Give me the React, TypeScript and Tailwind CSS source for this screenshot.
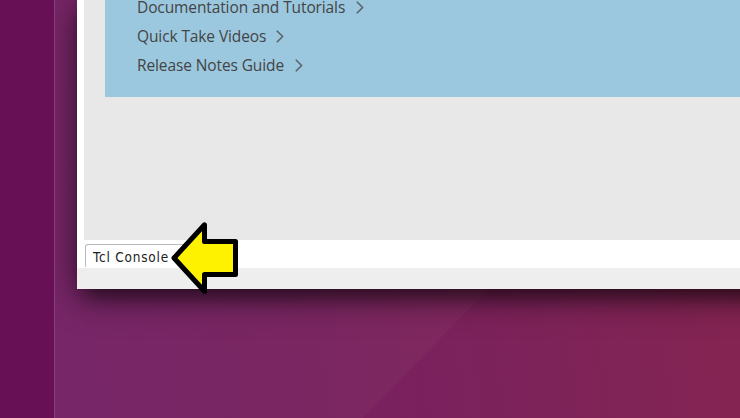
import React from "react";

const links = [
  { label: "Documentation and Tutorials", gap: "ml-[11px]" },
  { label: "Quick Take Videos", gap: "ml-[10px]" },
  { label: "Release Notes Guide", gap: "ml-[11px]" },
];

function Chevron({ className }: { className: string }) {
  return (
    <svg width="8" height="13" viewBox="0 0 8 13" fill="none" className={`${className} shrink-0`}>
      <path d="M0.8 0.8 L6.6 6.5 L0.8 12.2" stroke="#596066" strokeWidth="1.5" />
    </svg>
  );
}

function Arrow() {
  return (
    <svg className="absolute left-[168px] top-[218px]" width="74" height="80" viewBox="168 218 74 80">
      <path
        d="M174 258 L204.5 224.8 V241.6 H235.5 V274.5 H204.5 V291.2 Z"
        fill="#fff200"
        stroke="#000"
        strokeWidth="5"
        strokeLinejoin="round"
      />
    </svg>
  );
}

function Wallpaper() {
  return (
    <svg className="absolute inset-0" width="740" height="418">
      <defs>
        <linearGradient id="base" gradientUnits="userSpaceOnUse" x1="54" y1="418" x2="740" y2="330">
          <stop offset="0" stopColor="#772668" />
          <stop offset="0.33" stopColor="#792662" />
          <stop offset="0.6" stopColor="#80285f" />
          <stop offset="1" stopColor="#852a58" />
        </linearGradient>
        <linearGradient id="facet" gradientUnits="userSpaceOnUse" x1="370" y1="400" x2="740" y2="340">
          <stop offset="0" stopColor="#79205f" />
          <stop offset="0.5" stopColor="#7e2359" />
          <stop offset="1" stopColor="#842452" />
        </linearGradient>
      </defs>
      <rect width="740" height="418" fill="url(#base)" />
      <path d="M363 418 L495 282 H740 V418 Z" fill="url(#facet)" />
    </svg>
  );
}

export default function App() {
  return (
    <div className="relative h-[418px] w-[740px] overflow-hidden">
      <Wallpaper />
      <div className="relative flex h-full">
        <aside className="relative z-10 w-[55px] shrink-0 border-r border-[#874076] bg-[#681055]" />
        <main className="ml-[22px] flex h-[289px] w-[720px] shrink-0 flex-col bg-white shadow-[4px_9px_20px_-2px_rgba(0,0,0,0.55),0_6px_36px_0px_rgba(0,0,0,0.45)]">
          <section className="ml-[7px] h-[240px] bg-[#e8e8e8] pl-[21px]">
            <nav className="flex h-[97px] flex-col bg-[#9bc8df] pl-8 font-['Open_Sans',sans-serif] text-[15.5px] tracking-[-0.11px] text-[#444]">
              <ul className="-mt-[7px]">
                {links.map(({ label, gap }) => (
                  <li key={label} className="flex h-[29px] items-center whitespace-nowrap">
                    <span>{label}</span>
                    <Chevron className={gap} />
                  </li>
                ))}
              </ul>
            </nav>
          </section>
          <div className="flex h-7 pl-2 pt-1">
            <div className="h-[23px] w-[104px] rounded-tl-[3px] border-l border-t border-[#bbb] pl-[7px] font-['DejaVu_Sans_Condensed','DejaVu_Sans',sans-serif] text-[13.5px] font-stretch-condensed leading-[24px] tracking-[0.8px] text-[#222]">
              Tcl Console
            </div>
          </div>
          <footer className="h-[21px] bg-[#eee]" />
        </main>
      </div>
      <Arrow />
    </div>
  );
}
